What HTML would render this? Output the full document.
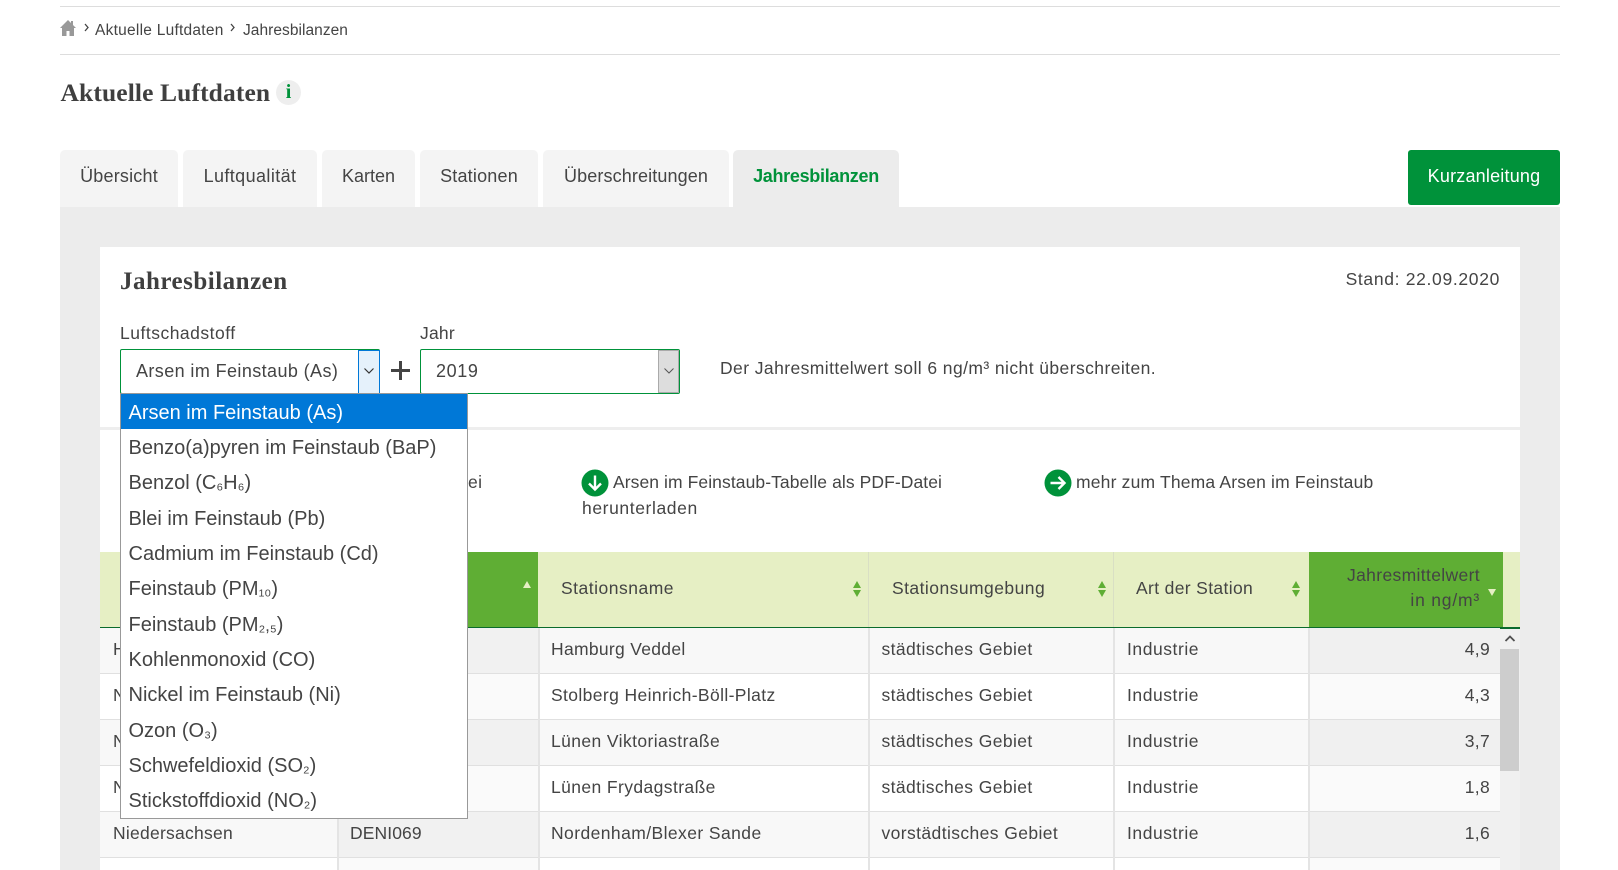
<!DOCTYPE html>
<html lang="de"><head><meta charset="utf-8"><title>Jahresbilanzen</title>
<style>
html,body{margin:0;padding:0;width:1618px;height:870px;overflow:hidden;background:#fff}
body{position:relative;font-family:"Liberation Sans",sans-serif;color:#444;font-size:17.5px}
.a{position:absolute}
.t{position:absolute;white-space:nowrap;line-height:24px;height:24px;letter-spacing:.4px}
.tab{position:absolute;top:150px;height:57px;background:#f4f4f4;border-radius:5px 5px 0 0;text-align:center;line-height:52px;font-size:18px;letter-spacing:.2px}
.h{position:absolute;top:552px;height:75px;background:#e6efc4;border-right:1px solid #d9dfc4;box-sizing:border-box}
.r{position:absolute;height:45px;box-sizing:content-box;border-bottom:2px solid #e0e0e0}
.v{position:absolute;width:2px;top:628px;height:242px;background:#e4e4e4}
.d{position:absolute;left:1px;width:346px;height:35.25px;line-height:36px;padding-left:7.500px;box-sizing:border-box;font-size:20px;color:#444;white-space:nowrap}
.d span{font-size:17px}
.s{position:absolute;width:14px;height:20px}
</style></head><body>

<div class="a" style="left:60px;top:6px;width:1500px;height:1px;background:#ddd"></div>
<div class="a" style="left:60px;top:54px;width:1500px;height:1px;background:#ddd"></div>
<svg class="a" style="left:60px;top:19px" width="16" height="18" viewBox="0 0 16 18"><path d="M8 1L0 9h2v8h4.500v-5h3v5H14V9h2l-3-3V2h-2v2z" fill="#999"/></svg>
<svg class="a" style="left:84px;top:23px" width="6" height="10" viewBox="0 0 6 10"><path d="M1 1l3 3.500L1 8" fill="none" stroke="#444" stroke-width="1.300"/></svg>
<div class="t" style="left:95px;top:19px;font-size:15.500px;letter-spacing:.25px">Aktuelle Luftdaten</div>
<svg class="a" style="left:230px;top:23px" width="6" height="10" viewBox="0 0 6 10"><path d="M1 1l3 3.500L1 8" fill="none" stroke="#444" stroke-width="1.300"/></svg>
<div class="t" style="left:243px;top:19px;font-size:15.500px;letter-spacing:.05px">Jahresbilanzen</div>

<div class="t" style="left:60.500px;top:81px;font-family:'Liberation Serif',serif;font-weight:bold;font-size:25.500px;color:#3f3f3f;letter-spacing:.12px">Aktuelle Luftdaten</div>
<div class="a" style="left:276px;top:80px;width:25px;height:25px;border-radius:50%;background:#eee;text-align:center;font:bold 20px/24px 'Liberation Serif',serif;color:#00923a">i</div>

<div class="tab" style="left:60px;width:118px">Übersicht</div>
<div class="tab" style="left:183px;width:134px;letter-spacing:.4px">Luftqualität</div>
<div class="tab" style="left:322px;width:93px;letter-spacing:0">Karten</div>
<div class="tab" style="left:420px;width:118px">Stationen</div>
<div class="tab" style="left:543px;width:186px;letter-spacing:.12px">Überschreitungen</div>
<div class="tab" style="left:733px;width:166px;background:#ececec;font-weight:bold;color:#00923a;letter-spacing:-.3px">Jahresbilanzen</div>
<div class="a" style="left:1408px;top:150px;width:152px;height:55px;background:#00923a;border-radius:3px;color:#fff;text-align:center;line-height:52px;font-size:18px;letter-spacing:.2px">Kurzanleitung</div>

<div class="a" style="left:60px;top:207px;width:1500px;height:663px;background:#ececec"></div>
<div class="a" style="left:100px;top:247px;width:1420px;height:623px;background:#fff"></div>

<div class="t" style="left:120px;top:270px;font-family:'Liberation Serif',serif;font-weight:bold;font-size:25px;color:#3f3f3f;letter-spacing:.5px">Jahresbilanzen</div>
<div class="t" style="right:118px;top:267px;letter-spacing:.67px">Stand: 22.09.2020</div>

<div class="t" style="left:120px;top:321px;letter-spacing:.5px">Luftschadstoff</div>
<div class="t" style="left:420px;top:321px;letter-spacing:.2px">Jahr</div>

<div class="a" style="left:120px;top:349px;width:260px;height:45px;border:1px solid #00923a;border-radius:2px;box-sizing:border-box"></div>
<div class="t" style="left:136px;top:359px;font-size:18px">Arsen im Feinstaub (As)</div>
<div class="a" style="left:358px;top:350px;width:22px;height:44px;background:#e5f1fb;border:1px solid #0078d7;box-sizing:border-box"></div>
<svg class="a" style="left:363px;top:366px" width="12" height="10" viewBox="0 0 12 10"><path d="M1.500 2.500L6 7l4.500-4.500" fill="none" stroke="#333" stroke-width="1.200"/></svg>

<div class="a" style="left:391px;top:369px;width:19px;height:3px;background:#444"></div>
<div class="a" style="left:399px;top:361px;width:3px;height:19px;background:#444"></div>

<div class="a" style="left:420px;top:349px;width:260px;height:45px;border:1px solid #00923a;border-radius:2px;box-sizing:border-box"></div>
<div class="t" style="left:436px;top:359px;font-size:18px;letter-spacing:.6px">2019</div>
<div class="a" style="left:658px;top:350px;width:21px;height:43px;background:#ddd;border:1px solid #aaa;box-sizing:border-box"></div>
<svg class="a" style="left:663px;top:366px" width="12" height="10" viewBox="0 0 12 10"><path d="M1.500 2.500L6 7l4.500-4.500" fill="none" stroke="#555" stroke-width="1"/></svg>

<div class="t" style="left:720px;top:356px;letter-spacing:.42px">Der Jahresmittelwert soll 6 ng/m³ nicht überschreiten.</div>

<div class="a" style="left:100px;top:427px;width:1420px;height:3px;background:#eee"></div>

<div class="t" style="left:468px;top:470px">ei</div>
<svg class="a" style="left:581px;top:469px" width="28" height="28" viewBox="0 0 28 28"><circle cx="14" cy="14" r="13.500" fill="#00923a"/><path d="M14 6.500v14M8 14.500l6 6 6-6" fill="none" stroke="#fff" stroke-width="2.400"/></svg>
<div class="t" style="left:613px;top:470px;letter-spacing:.08px">Arsen im Feinstaub-Tabelle als PDF-Datei</div>
<div class="t" style="left:582px;top:496px;letter-spacing:.6px">herunterladen</div>
<svg class="a" style="left:1044px;top:469px" width="28" height="28" viewBox="0 0 28 28"><circle cx="14" cy="14" r="13.500" fill="#00923a"/><path d="M6.500 14h14M14.500 8l6 6-6 6" fill="none" stroke="#fff" stroke-width="2.400"/></svg>
<div class="t" style="left:1076px;top:470px;letter-spacing:.18px">mehr zum Thema Arsen im Feinstaub</div>

<!-- table header -->
<div class="h" style="left:100px;width:238px"></div>
<div class="h" style="left:338px;width:200px;background:#5fae34;border:0"></div>
<div class="h" style="left:538px;width:331px"></div>
<div class="h" style="left:869px;width:245px"></div>
<div class="h" style="left:1114px;width:195px;border:0"></div>
<div class="h" style="left:1309px;width:194px;background:#5fae34;border:0"></div>
<div class="h" style="left:1503px;width:17px;border:0"></div>
<div class="a" style="left:100px;top:627px;width:1420px;height:2px;background:#0a6b2c"></div>

<div class="t" style="left:561px;top:576px;letter-spacing:.5px">Stationsname</div>
<div class="t" style="left:892px;top:576px;letter-spacing:.45px">Stationsumgebung</div>
<div class="t" style="left:1136px;top:576px;letter-spacing:.35px">Art der Station</div>
<div class="t" style="right:138px;top:563px;letter-spacing:.35px">Jahresmittelwert</div>
<div class="t" style="right:138px;top:588px;letter-spacing:.8px">in ng/m³</div>

<svg class="a" style="left:522px;top:581px" width="10" height="8" viewBox="0 0 10 8"><path d="M5 0l4 7H1z" fill="#e6efc4"/></svg>
<svg class="s" style="left:850px;top:579px" viewBox="0 0 14 20"><path d="M7 2l4 7H3zM7 18l4-7H3z" fill="#5fae34"/></svg>
<svg class="s" style="left:1095px;top:579px" viewBox="0 0 14 20"><path d="M7 2l4 7H3zM7 18l4-7H3z" fill="#5fae34"/></svg>
<svg class="s" style="left:1289px;top:579px" viewBox="0 0 14 20"><path d="M7 2l4 7H3zM7 18l4-7H3z" fill="#5fae34"/></svg>
<svg class="a" style="left:1487px;top:589px" width="10" height="8" viewBox="0 0 10 8"><path d="M5 7l4-7H1z" fill="#e6efc4"/></svg>

<!-- rows -->
<div class="r" style="left:100px;top:628px;width:1400px;background:#f8f8f8"></div>
<div class="r" style="left:100px;top:674px;width:1400px;background:#fff"></div>
<div class="r" style="left:100px;top:720px;width:1400px;background:#f8f8f8"></div>
<div class="r" style="left:100px;top:766px;width:1400px;background:#fff"></div>
<div class="r" style="left:100px;top:812px;width:1400px;background:#f8f8f8"></div>
<div class="a" style="left:100px;top:858px;width:1400px;height:12px;background:#fff"></div>

<div class="a" style="left:338px;top:628px;width:200px;height:45px;background:#f1f1f1"></div>
<div class="a" style="left:338px;top:674px;width:200px;height:45px;background:#fafafa"></div>
<div class="a" style="left:338px;top:720px;width:200px;height:45px;background:#f1f1f1"></div>
<div class="a" style="left:338px;top:766px;width:200px;height:45px;background:#fafafa"></div>
<div class="a" style="left:338px;top:812px;width:200px;height:45px;background:#f1f1f1"></div>
<div class="a" style="left:338px;top:858px;width:200px;height:12px;background:#fafafa"></div>

<div class="a" style="left:1310px;top:628px;width:190px;height:45px;background:#f0f0f0"></div>
<div class="a" style="left:1310px;top:674px;width:190px;height:45px;background:#fafafa"></div>
<div class="a" style="left:1310px;top:720px;width:190px;height:45px;background:#f0f0f0"></div>
<div class="a" style="left:1310px;top:766px;width:190px;height:45px;background:#fafafa"></div>
<div class="a" style="left:1310px;top:812px;width:190px;height:45px;background:#f0f0f0"></div>
<div class="a" style="left:1310px;top:858px;width:190px;height:12px;background:#fafafa"></div>

<div class="v" style="left:337px"></div>
<div class="v" style="left:538px"></div>
<div class="v" style="left:868px"></div>
<div class="v" style="left:1113px"></div>
<div class="v" style="left:1308px"></div>

<div class="t" style="left:113px;top:637px">H</div>
<div class="t" style="left:113px;top:683px">N</div>
<div class="t" style="left:113px;top:729px">N</div>
<div class="t" style="left:113px;top:775px">N</div>
<div class="t" style="left:113px;top:821px;letter-spacing:.25px">Niedersachsen</div>
<div class="t" style="left:350px;top:821px;letter-spacing:.1px">DENI069</div>

<div class="t" style="left:551px;top:637px;letter-spacing:.3px">Hamburg Veddel</div>
<div class="t" style="left:881.500px;top:637px">städtisches Gebiet</div>
<div class="t" style="left:1127px;top:637px;letter-spacing:.55px">Industrie</div>
<div class="t" style="right:128px;top:637px;letter-spacing:.3px">4,9</div>

<div class="t" style="left:551px;top:683px;letter-spacing:.38px">Stolberg Heinrich-Böll-Platz</div>
<div class="t" style="left:881.500px;top:683px">städtisches Gebiet</div>
<div class="t" style="left:1127px;top:683px;letter-spacing:.55px">Industrie</div>
<div class="t" style="right:128px;top:683px;letter-spacing:.3px">4,3</div>

<div class="t" style="left:551px;top:729px">Lünen Viktoriastraße</div>
<div class="t" style="left:881.500px;top:729px">städtisches Gebiet</div>
<div class="t" style="left:1127px;top:729px;letter-spacing:.55px">Industrie</div>
<div class="t" style="right:128px;top:729px;letter-spacing:.3px">3,7</div>

<div class="t" style="left:551px;top:775px">Lünen Frydagstraße</div>
<div class="t" style="left:881.500px;top:775px">städtisches Gebiet</div>
<div class="t" style="left:1127px;top:775px;letter-spacing:.55px">Industrie</div>
<div class="t" style="right:128px;top:775px;letter-spacing:.3px">1,8</div>

<div class="t" style="left:551px;top:821px;letter-spacing:.42px">Nordenham/Blexer Sande</div>
<div class="t" style="left:881.500px;top:821px">vorstädtisches Gebiet</div>
<div class="t" style="left:1127px;top:821px;letter-spacing:.55px">Industrie</div>
<div class="t" style="right:128px;top:821px;letter-spacing:.3px">1,6</div>

<!-- scrollbar -->
<div class="a" style="left:1500px;top:629px;width:20px;height:241px;background:#f0f0f0"></div>
<div class="a" style="left:1500px;top:649px;width:19px;height:122px;background:#cdcdcd"></div>
<svg class="a" style="left:1503px;top:634px" width="14" height="10" viewBox="0 0 14 10"><path d="M2.500 7L7 2.500 11.500 7" fill="none" stroke="#505050" stroke-width="1.800"/></svg>

<!-- dropdown -->
<div class="a" style="left:120px;top:393px;width:348px;height:426px;background:#fff;border:1px solid #999;box-sizing:border-box">
<div class="d" style="top:0;left:0;height:35px;line-height:38px;background:#0078d7;color:#fff">Arsen im Feinstaub (As)</div>
<div class="d" style="top:36px;left:0">Benzo(a)pyren im Feinstaub (BaP)</div>
<div class="d" style="top:71px;left:0">Benzol (C<span>₆</span>H<span>₆</span>)</div>
<div class="d" style="top:107px;left:0">Blei im Feinstaub (Pb)</div>
<div class="d" style="top:142px;left:0">Cadmium im Feinstaub (Cd)</div>
<div class="d" style="top:177px;left:0">Feinstaub (PM<span>₁₀</span>)</div>
<div class="d" style="top:213px;left:0">Feinstaub (PM<span>₂,₅</span>)</div>
<div class="d" style="top:248px;left:0">Kohlenmonoxid (CO)</div>
<div class="d" style="top:283px;left:0">Nickel im Feinstaub (Ni)</div>
<div class="d" style="top:319px;left:0">Ozon (O<span>₃</span>)</div>
<div class="d" style="top:354px;left:0">Schwefeldioxid (SO<span>₂</span>)</div>
<div class="d" style="top:389px;left:0">Stickstoffdioxid (NO<span>₂</span>)</div>
</div>

</body></html>
